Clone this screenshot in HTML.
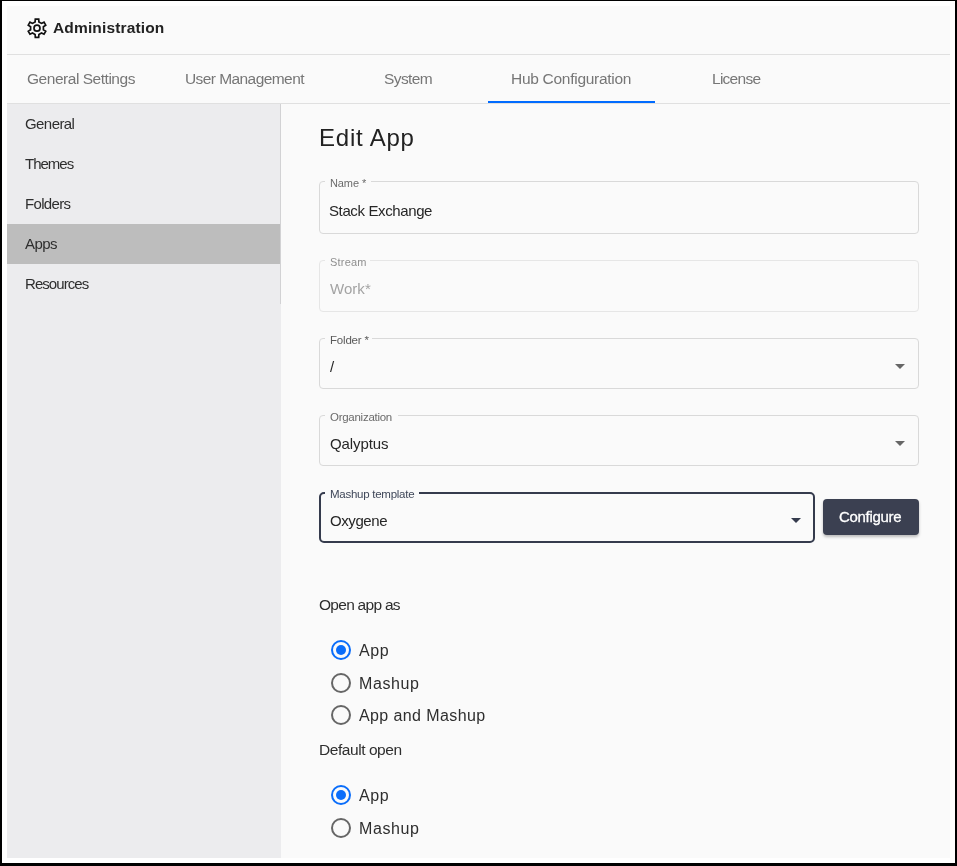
<!DOCTYPE html>
<html><head><meta charset="utf-8">
<style>
html,body{margin:0;padding:0;}
body{width:957px;height:866px;position:relative;overflow:hidden;background:#fff;font-family:"Liberation Sans",sans-serif;}
.frame{position:absolute;left:0;top:0;width:953px;height:862px;border-style:solid;border-color:#000;border-width:1px 2px 3px 2px;background:#fff;}
.app{position:absolute;left:7px;top:6px;width:943px;height:852px;background:#fafafa;overflow:hidden;}
.t{position:absolute;white-space:nowrap;line-height:1;will-change:transform;}
.hline{position:absolute;height:1px;background:#e0e0e0;}
.side{position:absolute;left:7px;top:104px;width:274px;height:754px;background:#ececee;}
.field{position:absolute;box-sizing:border-box;border:1px solid #d9d9d9;border-radius:4px;}
.gap{position:absolute;height:3px;background:#fafafa;}
.arrow{position:absolute;width:0;height:0;border-left:5px solid transparent;border-right:5px solid transparent;border-top:5px solid #666;}
.radio{position:absolute;box-sizing:border-box;width:20px;height:20px;border-radius:50%;border:2px solid #666;}
.radio.on{border-color:#0a6dfa;}
.radio.on::after{content:"";position:absolute;left:3px;top:3px;width:10px;height:10px;border-radius:50%;background:#0a6dfa;}
</style></head>
<body>
<div class="frame"></div>
<div class="app"></div>

<!-- header -->
<svg style="position:absolute;left:25px;top:16px" width="24" height="24" viewBox="0 -0.2 24 24">
<path d="M10.10,5.71 L10.30,2.90 L13.70,2.90 L13.90,5.71 L16.50,7.21 L19.03,5.98 L20.73,8.92 L18.40,10.50 L18.40,13.50 L20.73,15.08 L19.03,18.02 L16.50,16.79 L13.90,18.29 L13.70,21.10 L10.30,21.10 L10.10,18.29 L7.50,16.79 L4.97,18.02 L3.27,15.08 L5.60,13.50 L5.60,10.50 L3.27,8.92 L4.97,5.98 L7.50,7.21Z" fill="none" stroke="#111" stroke-width="1.7" stroke-linejoin="miter"/>
<circle cx="12" cy="12" r="3" fill="none" stroke="#111" stroke-width="1.7"/>
</svg>
<div class="hline" style="left:7px;top:54px;width:943px"></div>

<!-- tabs -->
<div style="position:absolute;left:488px;top:101px;width:167px;height:2px;background:#006bff"></div>
<div class="hline" style="left:7px;top:103px;width:943px"></div>

<!-- sidebar -->
<div class="side"></div>
<div style="position:absolute;left:280px;top:104px;width:1px;height:200px;background:#d2d2d4"></div>
<div style="position:absolute;left:7px;top:224px;width:273px;height:40px;background:#bdbdbd"></div>

<!-- fields -->
<div class="field" style="left:319px;top:181px;width:600px;height:53px"></div>
<div class="gap" style="left:325px;top:180px;width:46px"></div>

<div class="field" style="left:319px;top:260px;width:600px;height:52px;border-color:#e6e6e6"></div>
<div class="gap" style="left:325px;top:259px;width:45px"></div>

<div class="field" style="left:319px;top:338px;width:600px;height:51px"></div>
<div class="gap" style="left:325px;top:337px;width:47px"></div>
<div class="arrow" style="left:895px;top:364px"></div>

<div class="field" style="left:319px;top:415px;width:600px;height:51px"></div>
<div class="gap" style="left:325px;top:414px;width:73px"></div>
<div class="arrow" style="left:895px;top:441px"></div>

<div class="field" style="left:319px;top:492px;width:496px;height:51px;border:2px solid #353b4d;border-radius:5px"></div>
<div class="gap" style="left:325px;top:491px;width:94px;height:4px"></div>
<div class="arrow" style="left:791px;top:518px;border-top-color:#353b4d"></div>

<div style="position:absolute;left:823px;top:499px;width:96px;height:36px;border-radius:4px;background:#3b4051;box-shadow:0 2px 3px rgba(0,0,0,0.25)"></div>

<!-- radios -->
<div class="radio on" style="left:331px;top:640px"></div>
<div class="radio" style="left:331px;top:673px"></div>
<div class="radio" style="left:331px;top:705px"></div>
<div class="radio on" style="left:331px;top:785px"></div>
<div class="radio" style="left:331px;top:818px"></div>

<div class="t" style="left:53.20px;top:20.48px;font-size:15.5px;letter-spacing:0.15px;color:#222222;font-weight:bold;">Administration</div>
<div class="t" style="left:26.80px;top:70.63px;font-size:15.5px;letter-spacing:-0.47px;color:#767676;font-weight:normal;">General Settings</div>
<div class="t" style="left:185.10px;top:70.63px;font-size:15.5px;letter-spacing:-0.57px;color:#767676;font-weight:normal;">User Management</div>
<div class="t" style="left:383.50px;top:70.63px;font-size:15.5px;letter-spacing:-0.6px;color:#767676;font-weight:normal;">System</div>
<div class="t" style="left:511.00px;top:70.63px;font-size:15.5px;letter-spacing:-0.28px;color:#767676;font-weight:normal;">Hub Configuration</div>
<div class="t" style="left:711.70px;top:70.63px;font-size:15.5px;letter-spacing:-0.73px;color:#767676;font-weight:normal;">License</div>
<div class="t" style="left:24.60px;top:116.30px;font-size:15px;letter-spacing:-0.57px;color:#2e2e2e;font-weight:normal;">General</div>
<div class="t" style="left:24.60px;top:156.30px;font-size:15px;letter-spacing:-1.0px;color:#2e2e2e;font-weight:normal;">Themes</div>
<div class="t" style="left:24.60px;top:196.30px;font-size:15px;letter-spacing:-0.67px;color:#2e2e2e;font-weight:normal;">Folders</div>
<div class="t" style="left:24.60px;top:236.30px;font-size:15px;letter-spacing:-0.6px;color:#2e2e2e;font-weight:normal;">Apps</div>
<div class="t" style="left:24.60px;top:276.30px;font-size:15px;letter-spacing:-0.94px;color:#2e2e2e;font-weight:normal;">Resources</div>
<div class="t" style="left:318.50px;top:126.28px;font-size:24px;letter-spacing:0.79px;color:#222222;font-weight:normal;">Edit App</div>
<div class="t" style="left:329.50px;top:177.69px;font-size:11px;letter-spacing:-0.1px;color:#6b6b6b;font-weight:normal;">Name *</div>
<div class="t" style="left:328.70px;top:203.10px;font-size:15px;letter-spacing:-0.38px;color:#262626;font-weight:normal;">Stack Exchange</div>
<div class="t" style="left:329.70px;top:256.59px;font-size:11px;letter-spacing:0.2px;color:#8f8f8f;font-weight:normal;">Stream</div>
<div class="t" style="left:330.00px;top:281.20px;font-size:15px;letter-spacing:0.05px;color:#a3a3a3;font-weight:normal;">Work*</div>
<div class="t" style="left:329.90px;top:335.47px;font-size:11.5px;letter-spacing:-0.2px;color:#5a5a5a;font-weight:normal;">Folder *</div>
<div class="t" style="left:330.00px;top:359.30px;font-size:15px;letter-spacing:0px;color:#262626;font-weight:normal;">/</div>
<div class="t" style="left:330.40px;top:412.07px;font-size:11.5px;letter-spacing:-0.27px;color:#6b6b6b;font-weight:normal;">Organization</div>
<div class="t" style="left:330.00px;top:436.10px;font-size:15px;letter-spacing:-0.11px;color:#262626;font-weight:normal;">Qalyptus</div>
<div class="t" style="left:329.50px;top:489.47px;font-size:11.5px;letter-spacing:-0.26px;color:#3f4759;font-weight:normal;">Mashup template</div>
<div class="t" style="left:329.80px;top:512.80px;font-size:15px;letter-spacing:-0.42px;color:#262626;font-weight:normal;">Oxygene</div>
<div class="t" style="left:838.90px;top:509.10px;font-size:15px;letter-spacing:-0.3px;color:#ffffff;font-weight:normal;-webkit-text-stroke:0.3px #fff;">Configure</div>
<div class="t" style="left:319.00px;top:596.68px;font-size:15.5px;letter-spacing:-0.72px;color:#2e2e2e;font-weight:normal;">Open app as</div>
<div class="t" style="left:359.00px;top:643.16px;font-size:16px;letter-spacing:0.6px;color:#2e2e2e;font-weight:normal;">App</div>
<div class="t" style="left:359.00px;top:676.16px;font-size:16px;letter-spacing:0.6px;color:#2e2e2e;font-weight:normal;">Mashup</div>
<div class="t" style="left:359.00px;top:708.16px;font-size:16px;letter-spacing:0.4px;color:#2e2e2e;font-weight:normal;">App and Mashup</div>
<div class="t" style="left:319.00px;top:741.68px;font-size:15.5px;letter-spacing:-0.44px;color:#2e2e2e;font-weight:normal;">Default open</div>
<div class="t" style="left:359.00px;top:788.16px;font-size:16px;letter-spacing:0.6px;color:#2e2e2e;font-weight:normal;">App</div>
<div class="t" style="left:359.00px;top:821.16px;font-size:16px;letter-spacing:0.6px;color:#2e2e2e;font-weight:normal;">Mashup</div>
</body></html>
